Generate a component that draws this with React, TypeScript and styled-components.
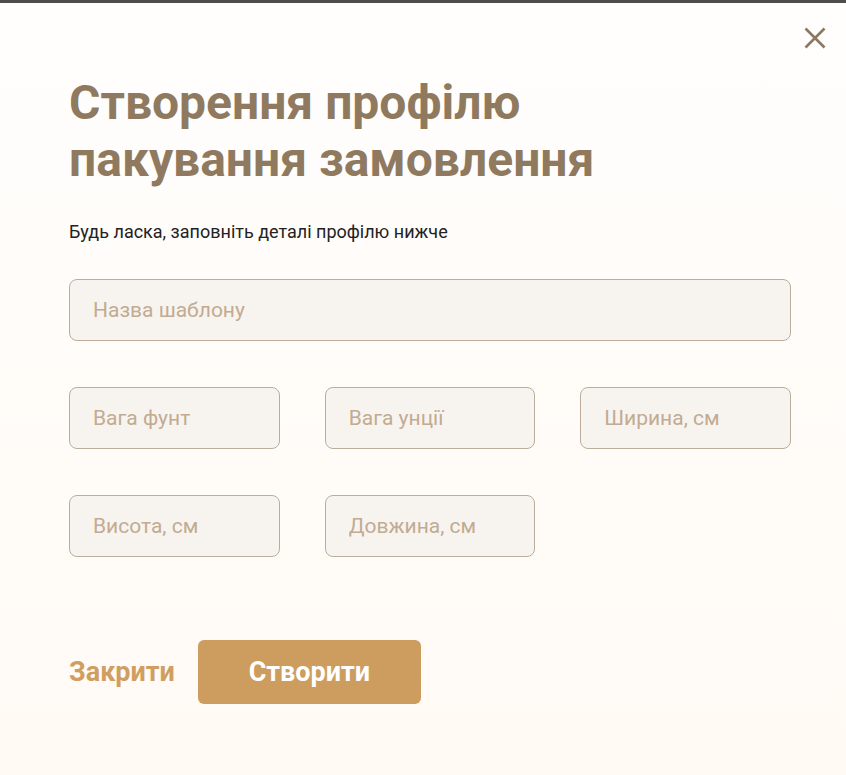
import React from "react";
import styled, { createGlobalStyle } from "styled-components";

const GlobalStyle = createGlobalStyle`
  html, body { margin: 0; padding: 0; }
  body {
    font-family: Roboto, "Noto Sans", "Liberation Sans", sans-serif;
    background: #fffdfa;
  }
  * { box-sizing: border-box; }
`;

const Page = styled.div`
  min-height: 775px;
  border-top: 3px solid #4d4d4d;
  background: linear-gradient(180deg, #fffefd 0%, #fffaf4 100%);
  position: relative;
`;

const Modal = styled.div`
  padding: 71px 55px 0 69px;
  display: flex;
  flex-direction: column;
`;

const CloseButton = styled.button`
  position: absolute;
  top: 21px;
  right: 17px;
  width: 28px;
  height: 28px;
  padding: 0;
  border: none;
  background: transparent;
  cursor: pointer;
  display: flex;
  align-items: center;
  justify-content: center;
`;

const Title = styled.h1`
  margin: 0;
  font-family: Roboto, "Noto Sans", sans-serif;
  font-weight: 700;
  font-size: 48px;
  line-height: 57px;
  color: #8f7a60;
  max-width: 580px;
`;

const Subtitle = styled.p`
  margin: 32px 0 0;
  font-size: 18px;
  line-height: 24px;
  color: #222222;
`;

const Form = styled.div`
  margin-top: 35px;
  display: flex;
  flex-direction: column;
  gap: 46px;
  width: 722px;
`;

const Grid = styled.div`
  display: grid;
  grid-template-columns: repeat(3, 1fr);
  column-gap: 45px;
  row-gap: 46px;
`;

const Input = styled.input`
  width: 100%;
  height: 62px;
  padding: 0 23px;
  border: 1px solid #bcac9b;
  border-radius: 8px;
  background: #f7f4ef;
  font-family: Roboto, "Noto Sans", sans-serif;
  font-size: 21px;
  color: #5a4a3a;
  outline: none;
  &::placeholder {
    color: #c2ab92;
  }
`;

const Actions = styled.div`
  margin-top: 83px;
  display: flex;
  align-items: center;
  gap: 23px;
`;

const TextButton = styled.button`
  padding: 0;
  border: none;
  background: transparent;
  font-family: Roboto, "Noto Sans", sans-serif;
  font-weight: 700;
  font-size: 27px;
  color: #cf9e61;
  cursor: pointer;
`;

const PrimaryButton = styled.button`
  width: 223px;
  height: 64px;
  border: none;
  border-radius: 6px;
  background: #cd9d60;
  font-family: Roboto, "Noto Sans", sans-serif;
  font-weight: 700;
  font-size: 27px;
  color: #ffffff;
  cursor: pointer;
`;

export default function App() {
  return (
    <>
      <GlobalStyle />
      <Page>
        <CloseButton aria-label="Закрити">
          <svg width="22" height="22" viewBox="0 0 22 22">
            <path d="M1.5 1.5 L20.5 20.5 M20.5 1.5 L1.5 20.5" stroke="#8b7762" strokeWidth="2.6" />
          </svg>
        </CloseButton>
        <Modal>
          <Title>Створення профілю пакування замовлення</Title>
          <Subtitle>Будь ласка, заповніть деталі профілю нижче</Subtitle>
          <Form>
            <Input placeholder="Назва шаблону" />
            <Grid>
              <Input placeholder="Вага фунт" />
              <Input placeholder="Вага унції" />
              <Input placeholder="Ширина, см" />
              <Input placeholder="Висота, см" />
              <Input placeholder="Довжина, см" />
            </Grid>
          </Form>
          <Actions>
            <TextButton>Закрити</TextButton>
            <PrimaryButton>Створити</PrimaryButton>
          </Actions>
        </Modal>
      </Page>
    </>
  );
}
